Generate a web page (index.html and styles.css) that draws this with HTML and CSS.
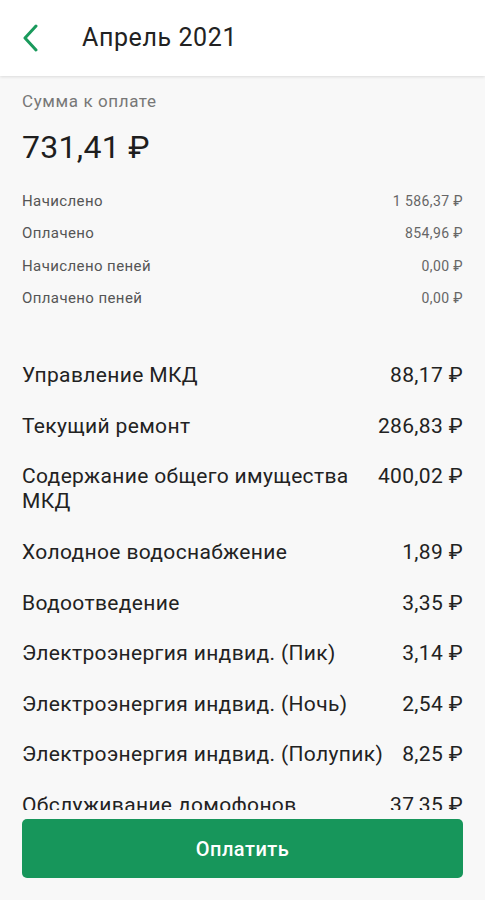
FILE: index.html
```html
<!DOCTYPE html>
<html lang="ru">
<head>
	<meta charset="UTF-8">
	<title>Апрель 2021</title>
	<link rel="stylesheet" href="styles.css">
</head>
<body>
	<div class="screen">
		<div class="header">
			<a class="back" href="###">
				<svg width="16" height="28" viewBox="0 0 16 28"><path d="M14 2 L3 14 L14 26" fill="none" stroke="#1a9a5c" stroke-width="3" stroke-linecap="round" stroke-linejoin="round"/></svg>
			</a>
			<h1>Апрель 2021</h1>
		</div>
		<div class="content">
			<p class="caption">Сумма к оплате</p>
			<p class="total">731,41 ₽</p>
			<ul class="summary">
				<li><span>Начислено</span><span class="val">1 586,37 ₽</span></li>
				<li><span>Оплачено</span><span class="val">854,96 ₽</span></li>
				<li><span>Начислено пеней</span><span class="val">0,00 ₽</span></li>
				<li><span>Оплачено пеней</span><span class="val">0,00 ₽</span></li>
			</ul>
			<ul class="services">
				<li><span class="name">Управление МКД</span><span class="sum">88,17 ₽</span></li>
				<li><span class="name">Текущий ремонт</span><span class="sum">286,83 ₽</span></li>
				<li><span class="name">Содержание общего имущества МКД</span><span class="sum">400,02 ₽</span></li>
				<li><span class="name">Холодное водоснабжение</span><span class="sum">1,89 ₽</span></li>
				<li><span class="name">Водоотведение</span><span class="sum">3,35 ₽</span></li>
				<li><span class="name">Электроэнергия индвид. (Пик)</span><span class="sum">3,14 ₽</span></li>
				<li><span class="name">Электроэнергия индвид. (Ночь)</span><span class="sum">2,54 ₽</span></li>
				<li><span class="name">Электроэнергия индвид. (Полупик)</span><span class="sum">8,25 ₽</span></li>
				<li><span class="name">Обслуживание домофонов</span><span class="sum">37,35 ₽</span></li>
			</ul>
		</div>
		<div class="footer">
			<button class="pay" type="button">Оплатить</button>
		</div>
	</div>
</body>
</html>
```

FILE: styles.css
```css
*{margin: 0;padding: 0;box-sizing: border-box;}
li{list-style: none;}
body{
	font-family: Roboto, "Noto Sans", "Liberation Sans", sans-serif;
	background: #f8f8f8;
	color: #222;
}
.screen{
	height: 900px;
	display: flex;
	flex-direction: column;
}
.header{
	height: 76px;
	flex: none;
	background: #fff;
	display: flex;
	align-items: center;
	padding-left: 22px;
	box-shadow: 0 1px 3px rgba(0,0,0,0.12);
	position: relative;
	z-index: 1;
}
.back{
	display: flex;
	width: 60px;
}
.header h1{
	font-size: 25px;
	font-weight: 400;
	letter-spacing: 0.6px;
	color: #222;
	padding-bottom: 2px;
}
.content{
	flex: 1;
	overflow: hidden;
	padding: 15px 22px 0;
}
.caption{
	font-size: 17px;
	line-height: 20px;
	letter-spacing: 0.6px;
	color: #777;
}
.total{
	margin-top: 17px;
	font-size: 32px;
	line-height: 38px;
	letter-spacing: 0.3px;
	color: #1e1e1e;
}
.summary{
	margin-top: 19px;
}
.summary li{
	display: flex;
	justify-content: space-between;
	font-size: 15px;
	line-height: 18px;
	letter-spacing: 0.4px;
	padding: 7px 0 7.33px;
	color: #555;
}
.summary .val{
	font-size: 14px;
	letter-spacing: 0.4px;
	color: #666;
}
.services{
	margin-top: 36px;
}
.services li{
	display: flex;
	justify-content: space-between;
	gap: 18px;
	font-size: 21px;
	line-height: 25px;
	letter-spacing: 0.35px;
	padding: 13px 0 12.55px;
	color: #222;
}
.services .sum{
	white-space: nowrap;
}
.footer{
	flex: none;
	height: 90px;
	padding: 9px 22px 22px;
	background: #f8f8f8;
}
.pay{
	width: 100%;
	height: 59px;
	border: none;
	border-radius: 5px;
	background: #17965b;
	color: #fff;
	font-family: Roboto, "Noto Sans", sans-serif;
	font-size: 20px;
	font-weight: 500;
	letter-spacing: 0.5px;
}
```
